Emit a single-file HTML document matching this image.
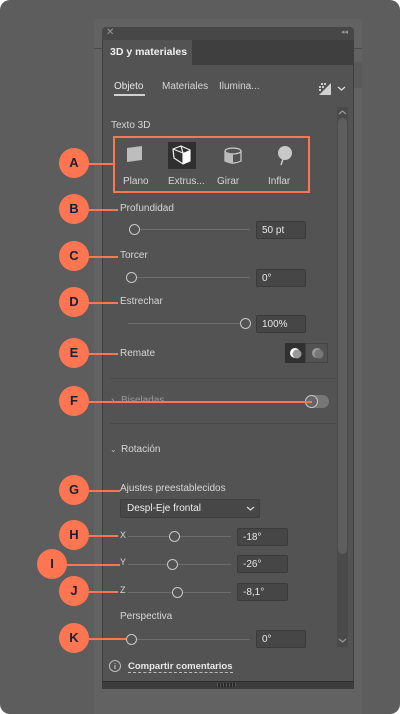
<!DOCTYPE html>
<html><head><meta charset="utf-8"><style>
*{margin:0;padding:0;box-sizing:border-box}
body{width:400px;height:714px;background:#fff;font-family:"Liberation Sans",sans-serif;overflow:hidden;position:relative}
.a{position:absolute}
.t{position:absolute;color:#d6d6d6;font-size:10px;line-height:12px;white-space:nowrap}
.in{position:absolute;background:#464646;border:1px solid #3a3a3a;border-radius:2px;color:#e8e8e8;font-size:10px;padding:3px 0 0 5px;height:18px}
.tr{position:absolute;height:1px;background:#6e6e6e}
.kn{position:absolute;width:11px;height:11px;border:1.6px solid #c8c8c8;border-radius:50%;background:#535353}
.c{position:absolute;width:30px;height:30px;border-radius:50%;background:#fe7552;color:#1c2033;font-weight:bold;font-size:13px;text-align:center;line-height:30px}
.l{position:absolute;height:1.5px;background:#fe7552}
</style></head><body>
<div class="a" style="left:0;top:0;width:400px;height:714px;background:#5d5d5d;border-radius:10px"></div>
<div class="a" style="left:94px;top:19px;width:268px;height:695px;background:#626262"></div>
<div class="a" style="left:94px;top:48px;width:8px;height:1px;background:#4a4a4a"></div>
<div class="a" style="left:353px;top:48px;width:9px;height:1px;background:#4a4a4a"></div>
<div class="a" style="left:353px;top:62px;width:9px;height:26px;background:#595959"></div>
<!-- panel -->
<div class="a" style="left:102px;top:27px;width:252px;height:662px;background:#535353;border:1px solid #3f3f3f;border-radius:4px 4px 0 0"></div>
<div class="a" style="left:102px;top:27px;width:252px;height:13px;background:#474747;border-radius:4px 4px 0 0"></div>
<div class="t" style="left:106px;top:27px;font-size:10px;color:#9a9a9a">✕</div>
<div class="t" style="left:341px;top:27px;font-size:7px;color:#9a9a9a">◂◂</div>
<div class="a" style="left:103px;top:40px;width:250px;height:25px;background:#3f3f3f"></div>
<div class="a" style="left:103px;top:40px;width:89px;height:25px;background:#535353"></div>
<div class="t" style="left:110px;top:46px;color:#f0f0f0;font-size:10.5px;font-weight:bold">3D y materiales</div>
<div class="t" style="left:114px;top:81px;color:#e8e8e8">Objeto</div>
<div class="a" style="left:114px;top:94px;width:31px;height:1.5px;background:#d0d0d0"></div>
<div class="t" style="left:162px;top:81px">Materiales</div>
<div class="t" style="left:219px;top:81px">Ilumina...</div>
<svg class="a" style="left:318px;top:82px" width="14" height="14"><path d="M13 1 V13 H1 Z" fill="#d0d0d0"/><rect x="3" y="1" width="2" height="2" fill="#ccc"/><rect x="6" y="1" width="2" height="2" fill="#ccc"/><rect x="1" y="4" width="2" height="2" fill="#ccc"/><rect x="4" y="4" width="2" height="2" fill="#ccc"/><rect x="1" y="7" width="2" height="2" fill="#ccc"/></svg>
<svg class="a" style="left:337px;top:85px" width="9" height="7"><path d="M1 2 L4.5 5 L8 2" stroke="#ddd" stroke-width="1.3" fill="none"/></svg>
<!-- scrollbar -->
<div class="a" style="left:337px;top:107px;width:11px;height:540px;background:#4a4a4a"></div>
<div class="a" style="left:338px;top:118px;width:9px;height:436px;background:#5e5e5e;border-radius:5px"></div>
<svg class="a" style="left:338px;top:109px" width="9" height="6"><path d="M1 5 L4.5 2 L8 5" stroke="#999" stroke-width="1.2" fill="none"/></svg>
<svg class="a" style="left:338px;top:638px" width="9" height="6"><path d="M1 1 L4.5 4 L8 1" stroke="#999" stroke-width="1.2" fill="none"/></svg>
<div class="t" style="left:111px;top:120px">Texto 3D</div>
<!-- 3D types box -->
<div class="a" style="left:113px;top:136px;width:197px;height:57px;border:2px solid #fe7552"></div>
<svg class="a" style="left:126px;top:145px" width="18" height="18"><path d="M1 3 L16 1 L16 15 L1 17 Z" fill="#bdbdbd"/></svg>
<div class="a" style="left:168px;top:142px;width:28px;height:27px;background:#2f2f2f"></div>
<svg class="a" style="left:171px;top:144px" width="22" height="22"><path d="M2 5 L10 2 L19 6 L19 17 L12 20 L3 14 Z" fill="none" stroke="#eee" stroke-width="1.2"/><path d="M12 9 L19 6 L19 17 L12 20 Z" fill="#fff"/><path d="M2 5 L12 9 L12 20 M12 9 L10 2" stroke="#eee" stroke-width="1.2" fill="none"/></svg>
<svg class="a" style="left:222px;top:146px" width="22" height="20"><ellipse cx="11" cy="5" rx="8" ry="3" fill="none" stroke="#ccc" stroke-width="1.2"/><path d="M3 5 V15 Q11 19 19 15 V5" fill="none" stroke="#ccc" stroke-width="1.2"/><path d="M3 6 L11 8 V18 Q6 17 3 15 Z" fill="#bbb"/></svg>
<svg class="a" style="left:276px;top:145px" width="18" height="22"><circle cx="9" cy="8" r="7" fill="#c8c8c8"/><path d="M7 14 L5 20" stroke="#c8c8c8" stroke-width="1.5"/></svg>
<div class="t" style="left:123px;top:176px">Plano</div>
<div class="t" style="left:168px;top:176px">Extrus...</div>
<div class="t" style="left:217px;top:176px">Girar</div>
<div class="t" style="left:268px;top:176px">Inflar</div>
<div class="t" style="left:120px;top:203px">Profundidad</div>
<div class="tr" style="left:134px;top:229px;width:116px"></div><div class="kn" style="left:129px;top:224px"></div>
<div class="in" style="left:256px;top:221px;width:50px">50 pt</div>
<div class="t" style="left:120px;top:250px">Torcer</div>
<div class="tr" style="left:131px;top:277px;width:119px"></div><div class="kn" style="left:126px;top:272px"></div>
<div class="in" style="left:256px;top:269px;width:50px">0°</div>
<div class="t" style="left:120px;top:296px">Estrechar</div>
<div class="tr" style="left:128px;top:323px;width:117px"></div><div class="kn" style="left:240px;top:318px"></div>
<div class="in" style="left:256px;top:315px;width:50px">100%</div>
<div class="t" style="left:120px;top:348px">Remate</div>
<div class="a" style="left:285px;top:343px;width:20px;height:20px;background:#303030"></div>
<div class="a" style="left:305px;top:343px;width:23px;height:20px;border:1px solid #444"></div>
<svg class="a" style="left:287px;top:345px" width="40" height="16"><circle cx="8" cy="8" r="5" fill="#fff"/><circle cx="10" cy="9" r="4.5" fill="#999"/><circle cx="30" cy="8" r="5" fill="#999"/><circle cx="32" cy="9" r="4.5" fill="#777"/></svg>
<div class="a" style="left:110px;top:378px;width:226px;height:1px;background:#484848"></div>
<div class="t" style="left:111px;top:395px;color:#aaa">›</div>
<div class="t" style="left:121px;top:395px;color:#9a9a9a">Biseladas</div>
<div class="a" style="left:305px;top:395px;width:24px;height:13px;background:#777;border-radius:7px"></div>
<div class="kn" style="left:305px;top:395px;width:13px;height:13px;background:#666"></div>
<div class="a" style="left:110px;top:423px;width:226px;height:1px;background:#484848"></div>
<div class="t" style="left:110px;top:444px;font-size:8px;color:#bbb">⌄</div>
<div class="t" style="left:121px;top:444px">Rotación</div>
<div class="t" style="left:120px;top:483px">Ajustes preestablecidos</div>
<div class="a" style="left:120px;top:499px;width:140px;height:19px;background:#474747;border:1px solid #3e3e3e;border-radius:2px"></div>
<div class="t" style="left:127px;top:503px;color:#eee">Despl-Eje frontal</div>
<svg class="a" style="left:246px;top:506px" width="9" height="6"><path d="M1 1 L4.5 4 L8 1" stroke="#ddd" stroke-width="1.2" fill="none"/></svg>
<div class="t" style="left:120px;top:529px;font-size:9px">X</div>
<div class="tr" style="left:128px;top:536px;width:103px"></div><div class="kn" style="left:169px;top:531px"></div>
<div class="in" style="left:237px;top:528px;width:51px">-18°</div>
<div class="t" style="left:120px;top:556px;font-size:9px">Y</div>
<div class="tr" style="left:128px;top:564px;width:103px"></div><div class="kn" style="left:167px;top:559px"></div>
<div class="in" style="left:237px;top:555px;width:51px">-26°</div>
<div class="t" style="left:120px;top:584px;font-size:9px">Z</div>
<div class="tr" style="left:128px;top:592px;width:103px"></div><div class="kn" style="left:172px;top:587px"></div>
<div class="in" style="left:237px;top:583px;width:51px">-8,1°</div>
<div class="t" style="left:120px;top:611px">Perspectiva</div>
<div class="tr" style="left:131px;top:639px;width:119px"></div><div class="kn" style="left:126px;top:634px"></div>
<div class="in" style="left:256px;top:630px;width:50px">0°</div>
<svg class="a" style="left:108px;top:659px" width="14" height="14"><circle cx="7" cy="7" r="5.5" fill="none" stroke="#bbb" stroke-width="1"/><path d="M7 6 V10 M7 4 V4.8" stroke="#bbb" stroke-width="1.2"/></svg>
<div class="t" style="left:128px;top:661px;color:#e8e8e8;font-weight:bold;font-size:9.5px;border-bottom:1px dashed #bbb;line-height:11px">Compartir comentarios</div>
<div class="a" style="left:102px;top:681px;width:252px;height:8px;background:#3c3c3c;border-top:1px solid #2e2e2e"></div>
<div class="a" style="left:217px;top:683px;width:19px;height:4px;background:repeating-linear-gradient(90deg,#555 0 1px,#2a2a2a 1px 3px)"></div>
<!-- callouts -->
<div class="l" style="left:80px;top:163px;width:34px"></div><div class="c" style="left:59px;top:148px">A</div>
<div class="l" style="left:80px;top:209px;width:38px"></div><div class="c" style="left:59px;top:194px">B</div>
<div class="l" style="left:80px;top:256px;width:38px"></div><div class="c" style="left:59px;top:241px">C</div>
<div class="l" style="left:80px;top:302px;width:38px"></div><div class="c" style="left:59px;top:287px">D</div>
<div class="l" style="left:80px;top:353px;width:38px"></div><div class="c" style="left:59px;top:338px">E</div>
<div class="l" style="left:80px;top:401px;width:232px"></div><div class="c" style="left:59px;top:386px">F</div>
<div class="l" style="left:80px;top:490px;width:40px"></div><div class="c" style="left:59px;top:475px">G</div>
<div class="l" style="left:80px;top:535px;width:38px"></div><div class="c" style="left:59px;top:520px">H</div>
<div class="l" style="left:60px;top:564px;width:60px"></div><div class="c" style="left:37px;top:549px">I</div>
<div class="l" style="left:80px;top:591px;width:38px"></div><div class="c" style="left:59px;top:576px">J</div>
<div class="l" style="left:80px;top:638px;width:46px"></div><div class="c" style="left:59px;top:623px">K</div>
</body></html>
